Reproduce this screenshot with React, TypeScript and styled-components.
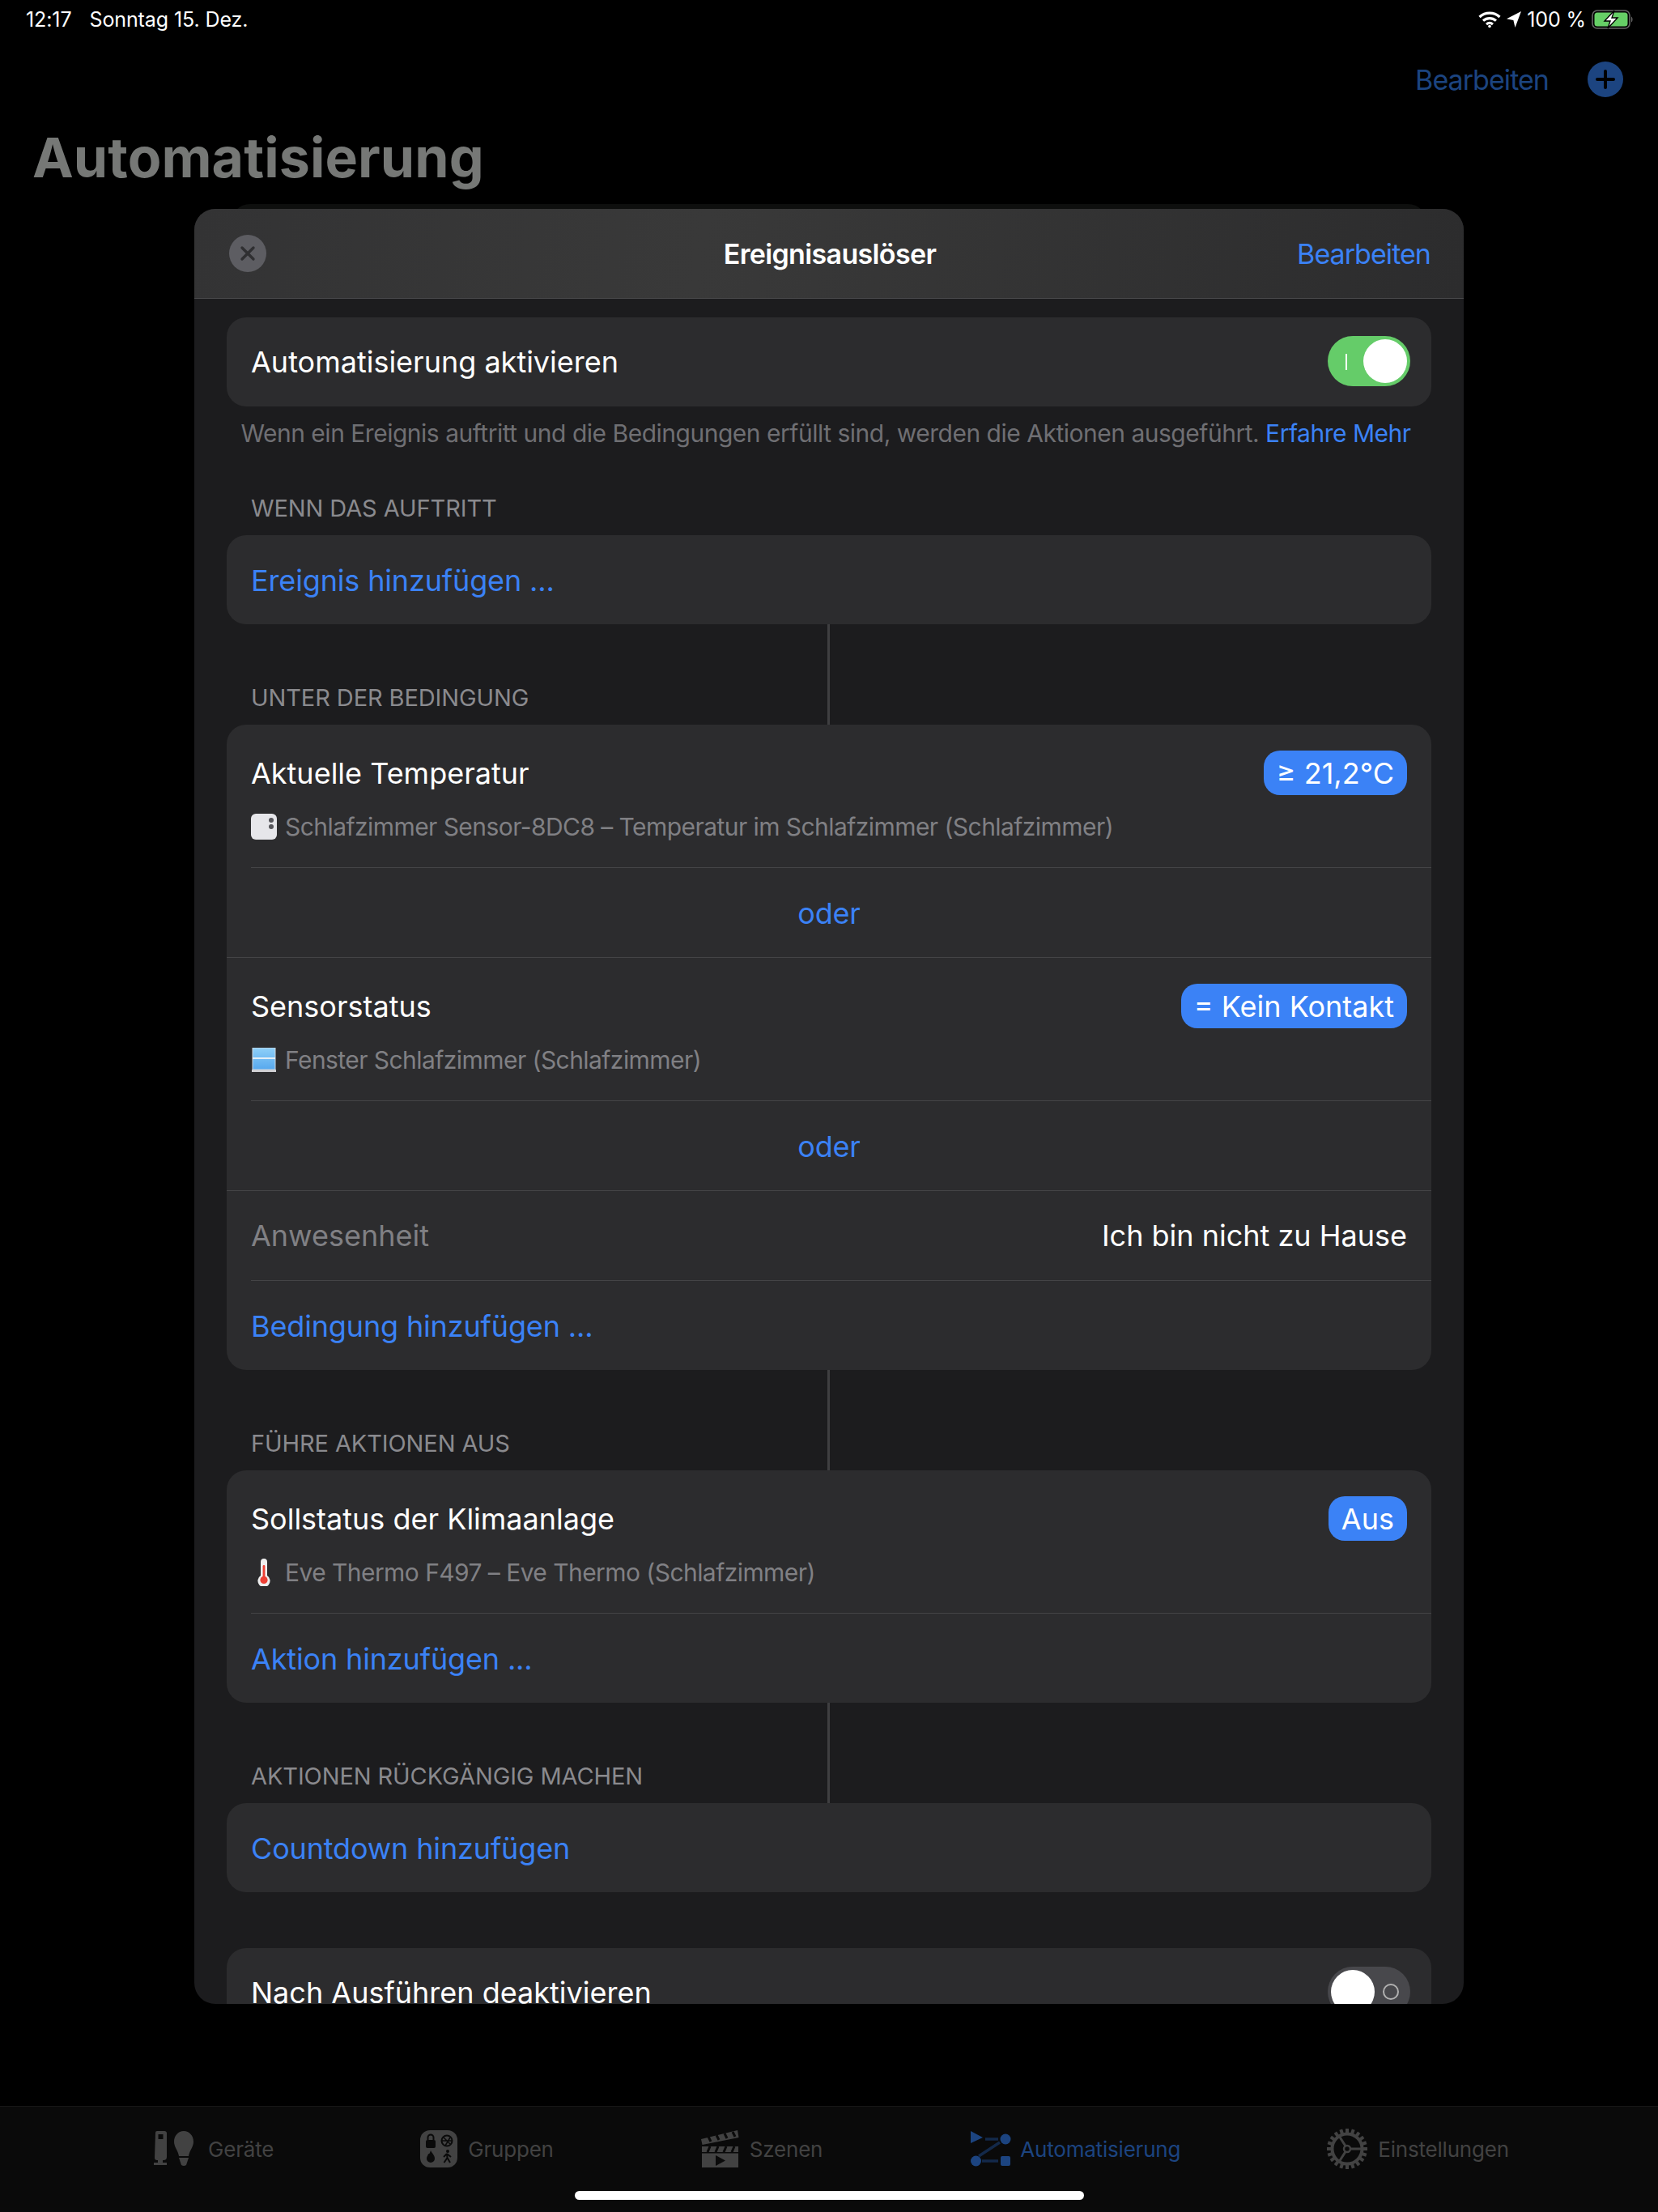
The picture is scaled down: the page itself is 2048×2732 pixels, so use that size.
import React from 'react';
import styled, { createGlobalStyle } from 'styled-components';

const BLUE = '#3b82f6';
const DIM_BLUE = '#1c4480';
const TAB_GREY = '#424242';

const GlobalStyle = createGlobalStyle`
  html, body {
    margin: 0;
    padding: 0;
    background: #000;
  }
  body {
    font-family: Inter, "Noto Sans", "Liberation Sans", sans-serif;
    color: #fff;
  }
`;

const Page = styled.div`
  position: relative;
  width: 2048px;
  height: 2732px;
  overflow: hidden;
  display: flex;
  flex-direction: column;
  background: #000;
`;

const StatusBar = styled.div`
  height: 48px;
  padding: 0 30px 0 32px;
  display: flex;
  align-items: center;
  font-size: 25px;
  letter-spacing: -0.1px;
`;

const StatusDate = styled.span`
  margin-left: 22px;
`;

const StatusRight = styled.div`
  margin-left: auto;
  display: flex;
  align-items: center;
  gap: 7px;
`;

const NavBar = styled.div`
  height: 100px;
  padding-right: 43px;
  display: flex;
  align-items: center;
  justify-content: flex-end;
  gap: 48px;
`;

const NavLink = styled.span`
  font-size: 34px;
  letter-spacing: -0.95px;
  color: ${DIM_BLUE};
`;

const PageTitle = styled.h1`
  margin: 6px 0 0;
  padding-left: 40px;
  font-size: 68px;
  line-height: 80px;
  font-weight: 700;
  letter-spacing: 0.1px;
  color: #767876;
`;

const BackSheet = styled.div`
  position: absolute;
  left: 285px;
  top: 252px;
  width: 1478px;
  height: 40px;
  border-radius: 24px 24px 0 0;
  background: #0e0f0e;
`;

const Modal = styled.div`
  position: absolute;
  left: 240px;
  top: 258px;
  width: 1568px;
  height: 2217px;
  overflow: hidden;
  border-radius: 26px;
  background: #1c1c1e;
`;

const ModalHeader = styled.div`
  height: 110px;
  padding: 0 41px 0 43px;
  display: grid;
  grid-template-columns: 1fr auto 1fr;
  align-items: center;
  border-bottom: 1px solid #4a4a4c;
  background: linear-gradient(100deg, #333334, #393939 40%, #2c2c2d);
`;

const CloseButton = styled.div`
  width: 46px;
  height: 46px;
  border-radius: 50%;
  background: #5d5d62;
  display: flex;
  align-items: center;
  justify-content: center;
`;

const ModalTitle = styled.div`
  font-size: 34px;
  font-weight: 600;
  letter-spacing: -0.65px;
`;

const HeaderAction = styled.div`
  justify-self: end;
  font-size: 34px;
  letter-spacing: -0.95px;
  color: ${BLUE};
`;

const ModalBody = styled.div`
  padding: 23px 40px 0;
`;

const Card = styled.div<{ $gap?: number }>`
  margin-top: ${p => p.$gap ?? 0}px;
  border-radius: 24px;
  background: #2c2c2e;
  overflow: hidden;
`;

const Row = styled.div<{ $tall?: boolean }>`
  margin-left: 30px;
  padding-right: 30px;
  padding-top: ${p => (p.$tall ? 32 : 0)}px;
  min-height: ${p => (p.$tall ? 144 : 110)}px;
  display: flex;
  flex-direction: column;
  justify-content: ${p => (p.$tall ? 'flex-start' : 'center')};
  border-bottom: 1px solid #444446;
  &:last-child {
    border-bottom: 0;
  }
`;

const RowLine = styled.div`
  display: flex;
  align-items: center;
  justify-content: space-between;
  min-height: 55px;
`;

const RowTitle = styled.span<{ $muted?: boolean }>`
  font-size: 36px;
  color: ${p => (p.$muted ? '#808084' : '#fff')};
`;

const RowValue = styled.span`
  font-size: 36px;
`;

const ActionText = styled.span<{ $center?: boolean }>`
  position: relative;
  top: 1px;
  font-size: 36px;
  letter-spacing: -0.15px;
  color: ${BLUE};
  margin-right: ${p => (p.$center ? '0' : 'auto')};
`;

const CenterRow = styled(Row)`
  margin-left: 0;
  padding-right: 0;
  align-items: center;
`;

const SubLine = styled.div`
  margin-top: 20px;
  display: flex;
  align-items: center;
  gap: 10px;
  font-size: 30px;
  line-height: 38px;
  letter-spacing: -0.56px;
  color: #808084;
`;

const ValuePill = styled.span`
  height: 55px;
  padding: 0 16px;
  border-radius: 20px;
  background: ${BLUE};
  display: flex;
  align-items: center;
  font-size: 36px;
`;

const Switch = styled.div<{ $on?: boolean }>`
  position: relative;
  flex: none;
  margin: -2px -4px 0 0;
  width: 102px;
  height: 62px;
  border-radius: 31px;
  background: ${p => (p.$on ? '#65cc69' : '#48484c')};
`;

const SwitchKnob = styled.span<{ $on?: boolean }>`
  position: absolute;
  top: 4px;
  left: ${p => (p.$on ? 44 : 4)}px;
  width: 54px;
  height: 54px;
  border-radius: 50%;
  background: #fff;
`;

const SwitchBar = styled.span`
  position: absolute;
  left: 22px;
  top: 22px;
  width: 2px;
  height: 20px;
  background: #fff;
`;

const SwitchRing = styled.span`
  position: absolute;
  right: 14px;
  top: 21px;
  width: 20px;
  height: 20px;
  box-sizing: border-box;
  border: 2px solid #b0b0b0;
  border-radius: 50%;
`;

const Note = styled.div`
  margin-top: 14px;
  padding-right: 8px;
  text-align: center;
  font-size: 30px;
  line-height: 38px;
  letter-spacing: -0.49px;
  color: #6f6f73;
`;

const NoteLink = styled.span`
  color: ${BLUE};
`;

const SectionHead = styled.div<{ $linked?: boolean; $height: number }>`
  position: relative;
  height: ${p => p.$height}px;
  display: flex;
  align-items: flex-end;
  padding: 0 0 18px 30px;
  box-sizing: border-box;
  font-size: 29px;
  line-height: 30px;
  letter-spacing: -0.1px;
  color: #8a8a8e;
  ${p =>
    p.$linked &&
    `&::before {
      content: '';
      position: absolute;
      left: 742px;
      top: 0;
      bottom: 0;
      width: 3px;
      background: #3f3f41;
    }`}
`;

const TabBar = styled.div`
  position: absolute;
  left: 0;
  right: 0;
  bottom: 0;
  height: 131px;
  box-sizing: border-box;
  padding: 26px 0 0 10px;
  border-top: 1px solid #161616;
  background: #0a0a0a;
  display: flex;
  align-items: flex-start;
  justify-content: center;
  gap: 181px;
`;

const TabItem = styled.div<{ $active?: boolean }>`
  display: flex;
  align-items: center;
  gap: 13px;
  height: 52px;
  font-size: 26px;
  letter-spacing: -0.2px;
  color: ${p => (p.$active ? DIM_BLUE : TAB_GREY)};
`;

const HomeIndicator = styled.div`
  position: absolute;
  left: 710px;
  bottom: 15px;
  width: 629px;
  height: 11px;
  border-radius: 6px;
  background: #fff;
`;

const WifiIcon = () => (
  <svg width="28" height="22" viewBox="0 0 28 22" fill="none" stroke="#fff" strokeWidth="3.2">
    <path d="M1.5 8 C8.5 1.5 19.5 1.5 26.5 8" />
    <path d="M6 12.6 C10.5 8.6 17.5 8.6 22 12.6" />
    <path d="M10 17 C12.5 15 15.5 15 18 17" />
    <circle cx="14" cy="19.5" r="1.8" fill="#fff" stroke="none" />
  </svg>
);

const LocationIcon = () => (
  <svg width="18" height="20" viewBox="0 0 18 20">
    <path d="M18 0 L10.5 20 L8.4 11 L0 9.2 Z" fill="#fff" />
  </svg>
);

const BatteryIcon = () => (
  <svg width="52" height="24" viewBox="0 0 52 24">
    <rect x="1" y="1" width="46" height="22" rx="6" fill="none" stroke="#666" strokeWidth="1.6" />
    <rect x="3.5" y="3.5" width="41" height="17" rx="3.5" fill="#66cf66" />
    <path d="M49 8.5 C51 9.5 51 14.5 49 15.5 Z" fill="#666" />
    <path d="M28 1 L16 14 H23 L20 23 L32 10 H25 Z" fill="#fff" stroke="#000" strokeWidth="1.4" />
  </svg>
);

const PlusCircle = () => (
  <svg width="44" height="44" viewBox="0 0 44 44">
    <circle cx="22" cy="22" r="22" fill={DIM_BLUE} />
    <path d="M22 12 V32 M12 22 H32" stroke="#000" strokeWidth="4" strokeLinecap="round" />
  </svg>
);

const CloseIcon = () => (
  <svg width="20" height="20" viewBox="0 0 20 20">
    <path d="M3 3 L17 17 M17 3 L3 17" stroke="#2f2f31" strokeWidth="3.4" strokeLinecap="round" />
  </svg>
);

const SensorIcon = () => (
  <svg width="32" height="32" viewBox="0 0 32 32">
    <rect width="32" height="32" rx="6" fill="#e6e6ea" />
    <circle cx="25" cy="8" r="3" fill="#55555a" />
    <circle cx="25" cy="16" r="3" fill="#55555a" />
  </svg>
);

const WindowIcon = () => (
  <svg width="32" height="30" viewBox="0 0 32 30">
    <defs>
      <linearGradient id="pane" x1="0" y1="0" x2="0" y2="1">
        <stop offset="0" stopColor="#8fd0f8" />
        <stop offset="1" stopColor="#56a8ee" />
      </linearGradient>
    </defs>
    <rect x="2" y="0" width="28" height="27" fill="url(#pane)" stroke="#cfd8e0" strokeWidth="1" />
    <rect x="2" y="12" width="28" height="2" fill="#e2eef6" />
    <rect x="1" y="27" width="30" height="3" fill="#d0d0d4" />
  </svg>
);

const ThermoIcon = () => (
  <svg width="32" height="34" viewBox="0 0 32 34">
    <path d="M12 4 a4 4 0 0 1 8 0 V21 a7.6 7.6 0 1 1 -8 0 Z" fill="#eeeeee" />
    <rect x="14.6" y="8" width="2.8" height="16" rx="1.4" fill="#ee4035" />
    <circle cx="16" cy="26.4" r="4.6" fill="#ee4035" />
  </svg>
);

const DevicesIcon = () => (
  <svg width="50" height="44" viewBox="4 0 50 44" overflow="visible" fill={TAB_GREY}>
    <path d="M2 2 a2 2 0 0 1 2 -2 H13 a3 3 0 0 1 3 2 V32 a4 4 0 0 1 -4 4 H11 V39 H16 V42 H0 V39 H5 V36 H4 a3 3 0 0 1 -3 -3 Z" />
    <rect x="5.5" y="4" width="6" height="6" fill="#0a0a0a" />
    <path d="M37 0 C44 0 49 6 49 13 C49 20 44 24 43 31 H31 C30 24 25 20 25 13 C25 6 30 0 37 0 Z" />
    <path d="M31 33 H43 L40 42 Q37 44 34 42 Z" />
  </svg>
);

const GroupsIcon = () => (
  <svg width="46" height="46" viewBox="0 0 46 46">
    <rect width="46" height="46" rx="12" fill={TAB_GREY} />
    <rect x="7" y="12" width="12" height="10" rx="2" fill="#0a0a0a" />
    <path d="M9.5 12 V9 a3.5 3.5 0 0 1 7 0 V12" fill="none" stroke="#0a0a0a" strokeWidth="2" />
    <circle cx="33" cy="13" r="6.5" fill="none" stroke="#0a0a0a" strokeWidth="2" />
    <path d="M29 9 L37 17 M37 9 L31 19 M27 13 H39" stroke="#0a0a0a" strokeWidth="1.5" />
    <path d="M13 25 C15 29 18 31 18 35 A5 5 0 0 1 8 35 C8 32 10 31 10 29 C12 30 12 27 13 25 Z" fill="#0a0a0a" />
    <circle cx="34" cy="26" r="2" fill="#0a0a0a" />
    <path d="M33 29 L29 33 M33 29 L38 33 M33 29 L33.5 34 L29.5 40 M33.5 34 L37 40" stroke="#0a0a0a" strokeWidth="2" fill="none" />
  </svg>
);

const ScenesIcon = () => (
  <svg width="48" height="46" viewBox="0 0 48 46">
    <path d="M1 11 L46 0 L47.5 9 L2.5 18 Z" fill={TAB_GREY} />
    <path d="M10 8 L13 14 M20 6 L23 12 M30 4 L33 10 M40 2 L43 8" stroke="#0a0a0a" strokeWidth="3" />
    <rect x="2" y="20" width="45" height="26" fill={TAB_GREY} />
    <path d="M12 20 L9 27 M22 20 L19 27 M32 20 L29 27 M42 20 L39 27" stroke="#0a0a0a" strokeWidth="3" />
    <rect x="2" y="27" width="45" height="1.5" fill="#0a0a0a" />
    <path d="M19 31 L31 37.5 L19 44 Z" fill="#0a0a0a" />
  </svg>
);

const AutomationIcon = () => (
  <svg width="50" height="44" viewBox="-2 0 50 44" overflow="visible" fill={DIM_BLUE}>
    <path d="M0 0 L15 8 L0 15 Z" />
    <circle cx="43" cy="10" r="6.5" />
    <circle cx="6.5" cy="37" r="6.5" />
    <rect x="37" y="31" width="12" height="12" rx="2" />
    <path d="M18 10 H34 M14 37 H34 M10 31 L36 14" stroke={DIM_BLUE} strokeOpacity="0.55" strokeWidth="3.5" />
  </svg>
);

const gearTeeth = Array.from({ length: 20 }, (_, i) => i * 18);

const GearIcon = () => (
  <svg width="50" height="50" viewBox="0 0 50 50" fill="none" stroke={TAB_GREY}>
    {gearTeeth.map(deg => (
      <rect key={deg} x="23" y="0" width="4" height="6" fill={TAB_GREY} stroke="none" transform={`rotate(${deg} 25 25)`} />
    ))}
    <circle cx="25" cy="25" r="18.5" strokeWidth="4" />
    <circle cx="25" cy="25" r="4" strokeWidth="2.5" />
    <path d="M29 25 H44 M23 21.5 L15 9 M23 28.5 L15 41" strokeWidth="3" />
  </svg>
);

const tabs = [
  { label: 'Geräte', icon: <DevicesIcon /> },
  { label: 'Gruppen', icon: <GroupsIcon /> },
  { label: 'Szenen', icon: <ScenesIcon /> },
  { label: 'Automatisierung', icon: <AutomationIcon />, active: true },
  { label: 'Einstellungen', icon: <GearIcon /> }
];

const App = () => {
  return (
    <Page>
      <GlobalStyle />
      <StatusBar>
        <span>12:17</span>
        <StatusDate>Sonntag 15. Dez.</StatusDate>
        <StatusRight>
          <WifiIcon />
          <LocationIcon />
          <span>100 %</span>
          <BatteryIcon />
        </StatusRight>
      </StatusBar>
      <NavBar>
        <NavLink>Bearbeiten</NavLink>
        <PlusCircle />
      </NavBar>
      <PageTitle>Automatisierung</PageTitle>

      <BackSheet />
      <Modal>
        <ModalHeader>
          <CloseButton>
            <CloseIcon />
          </CloseButton>
          <ModalTitle>Ereignisauslöser</ModalTitle>
          <HeaderAction>Bearbeiten</HeaderAction>
        </ModalHeader>
        <ModalBody>
          <Card>
            <Row>
              <RowLine>
                <RowTitle>Automatisierung aktivieren</RowTitle>
                <Switch $on>
                  <SwitchBar />
                  <SwitchKnob $on />
                </Switch>
              </RowLine>
            </Row>
          </Card>
          <Note>
            Wenn ein Ereignis auftritt und die Bedingungen erfüllt sind, werden die Aktionen ausgeführt.{' '}
            <NoteLink>Erfahre Mehr</NoteLink>
          </Note>

          <SectionHead $height={107}>WENN DAS AUFTRITT</SectionHead>
          <Card>
            <Row>
              <ActionText>Ereignis hinzufügen ...</ActionText>
            </Row>
          </Card>

          <SectionHead $linked $height={124}>UNTER DER BEDINGUNG</SectionHead>
          <Card>
            <Row $tall>
              <RowLine>
                <RowTitle>Aktuelle Temperatur</RowTitle>
                <ValuePill>≥ 21,2°C</ValuePill>
              </RowLine>
              <SubLine>
                <SensorIcon />
                Schlafzimmer Sensor-8DC8 – Temperatur im Schlafzimmer (Schlafzimmer)
              </SubLine>
            </Row>
            <CenterRow>
              <ActionText $center>oder</ActionText>
            </CenterRow>
            <Row $tall>
              <RowLine>
                <RowTitle>Sensorstatus</RowTitle>
                <ValuePill>= Kein Kontakt</ValuePill>
              </RowLine>
              <SubLine>
                <WindowIcon />
                Fenster Schlafzimmer (Schlafzimmer)
              </SubLine>
            </Row>
            <CenterRow>
              <ActionText $center>oder</ActionText>
            </CenterRow>
            <Row>
              <RowLine>
                <RowTitle $muted>Anwesenheit</RowTitle>
                <RowValue>Ich bin nicht zu Hause</RowValue>
              </RowLine>
            </Row>
            <Row>
              <ActionText>Bedingung hinzufügen ...</ActionText>
            </Row>
          </Card>

          <SectionHead $linked $height={124}>FÜHRE AKTIONEN AUS</SectionHead>
          <Card>
            <Row $tall>
              <RowLine>
                <RowTitle>Sollstatus der Klimaanlage</RowTitle>
                <ValuePill>Aus</ValuePill>
              </RowLine>
              <SubLine>
                <ThermoIcon />
                Eve Thermo F497 – Eve Thermo (Schlafzimmer)
              </SubLine>
            </Row>
            <Row>
              <ActionText>Aktion hinzufügen ...</ActionText>
            </Row>
          </Card>

          <SectionHead $linked $height={124}>AKTIONEN RÜCKGÄNGIG MACHEN</SectionHead>
          <Card>
            <Row>
              <ActionText>Countdown hinzufügen</ActionText>
            </Row>
          </Card>

          <Card $gap={69}>
            <Row>
              <RowLine>
                <RowTitle>Nach Ausführen deaktivieren</RowTitle>
                <Switch>
                  <SwitchKnob />
                  <SwitchRing />
                </Switch>
              </RowLine>
            </Row>
          </Card>
        </ModalBody>
      </Modal>

      <TabBar>
        {tabs.map(tab => (
          <TabItem key={tab.label} $active={tab.active}>
            {tab.icon}
            <span>{tab.label}</span>
          </TabItem>
        ))}
      </TabBar>
      <HomeIndicator />
    </Page>
  );
};

export default App;
